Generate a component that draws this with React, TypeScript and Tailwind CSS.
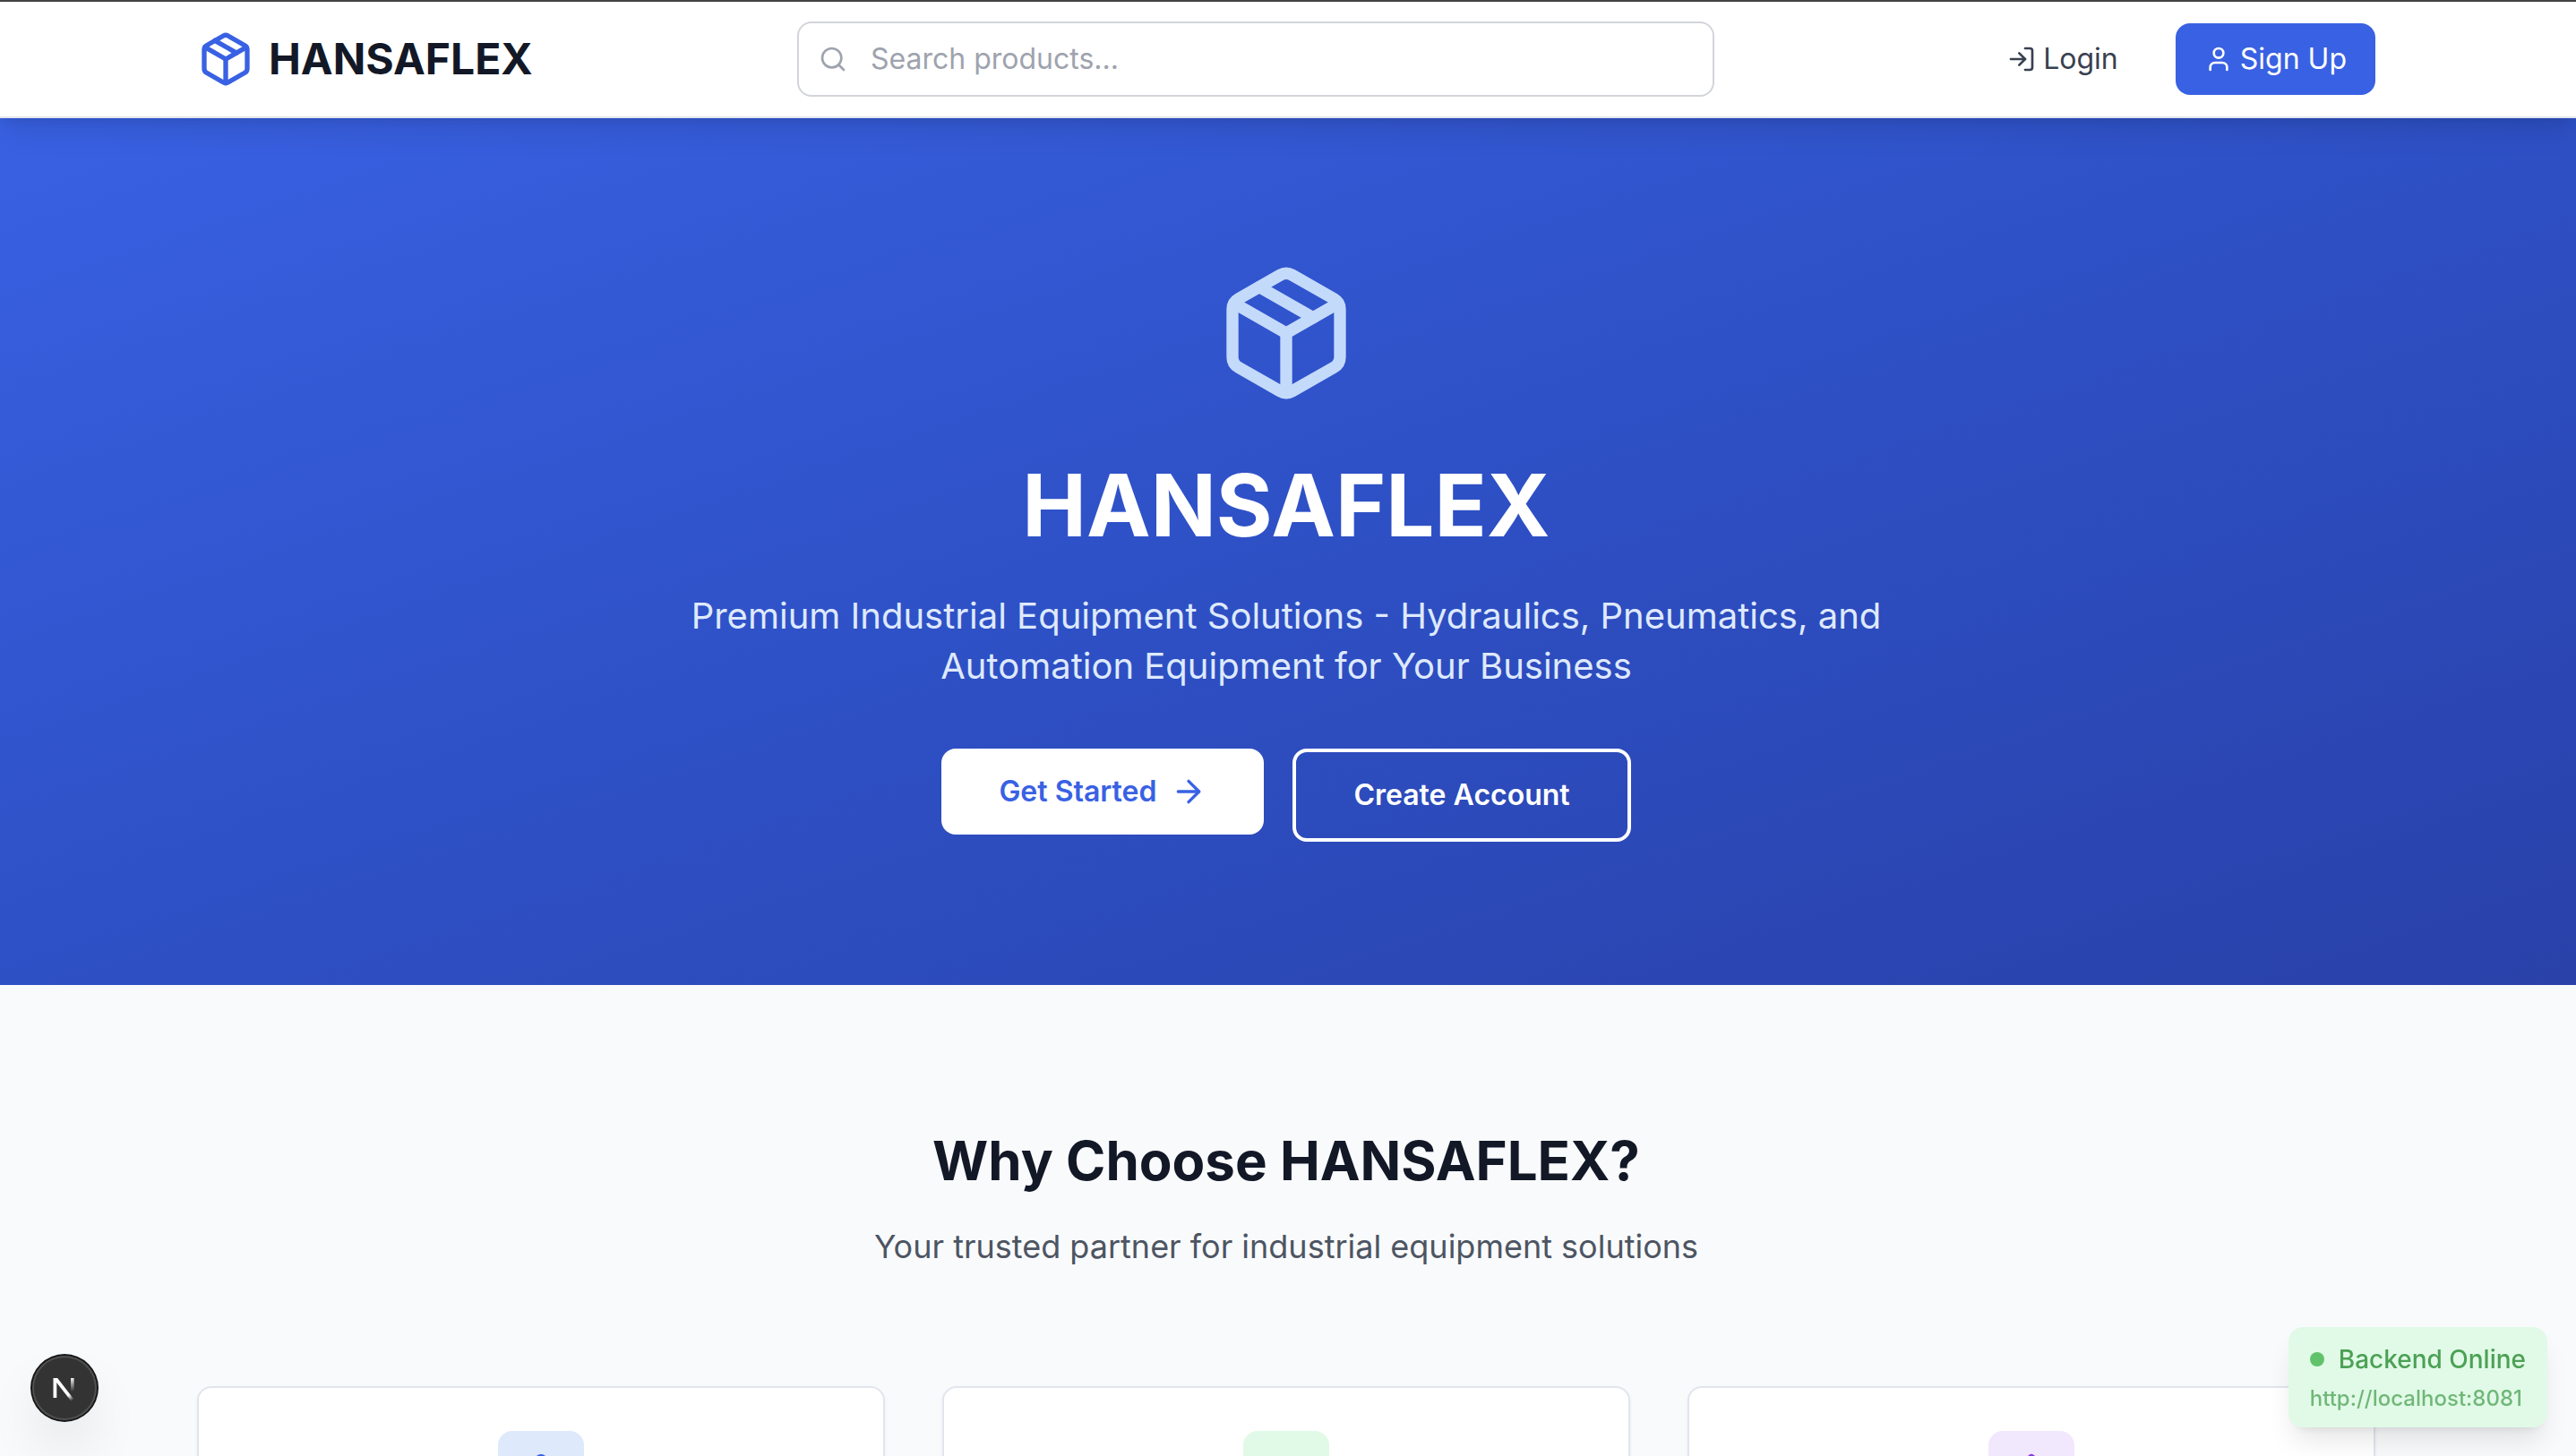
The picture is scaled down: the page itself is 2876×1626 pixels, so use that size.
import React from "react";
import { ArrowRight, LogIn, Search, Shield, Truck, User } from "lucide-react";

function PackageIcon({ className }: { className: string }) {
  return (
    <svg
      viewBox="0 0 24 24"
      fill="none"
      stroke="currentColor"
      strokeWidth="2"
      strokeLinecap="round"
      strokeLinejoin="round"
      aria-hidden="true"
      className={className}
    >
      <path d="m7.5 4.27 9 5.15" />
      <path d="M21 8a2 2 0 0 0-1-1.73l-7-4a2 2 0 0 0-2 0l-7 4A2 2 0 0 0 3 8v8a2 2 0 0 0 1 1.73l7 4a2 2 0 0 0 2 0l7-4A2 2 0 0 0 21 16Z" />
      <path d="m3.3 7 8.7 5 8.7-5" />
      <path d="M12 22V12" />
    </svg>
  );
}

function GearIcon({ className }: { className: string }) {
  return (
    <svg
      viewBox="0 0 24 24"
      fill="none"
      stroke="currentColor"
      strokeWidth="2"
      strokeLinecap="round"
      strokeLinejoin="round"
      aria-hidden="true"
      className={className}
    >
      <path d="M12.22 2h-.44a2 2 0 0 0-2 2v.18a2 2 0 0 1-1 1.73l-.43.25a2 2 0 0 1-2 0l-.15-.08a2 2 0 0 0-2.73.73l-.22.38a2 2 0 0 0 .73 2.73l.15.1a2 2 0 0 1 1 1.72v.51a2 2 0 0 1-1 1.74l-.15.09a2 2 0 0 0-.73 2.73l.22.38a2 2 0 0 0 2.73.73l.15-.08a2 2 0 0 1 2 0l.43.25a2 2 0 0 1 1 1.73V20a2 2 0 0 0 2 2h.44a2 2 0 0 0 2-2v-.18a2 2 0 0 1 1-1.73l.43-.25a2 2 0 0 1 2 0l.15.08a2 2 0 0 0 2.73-.73l.22-.39a2 2 0 0 0-.73-2.73l-.15-.08a2 2 0 0 1-1-1.74v-.5a2 2 0 0 1 1-1.74l.15-.09a2 2 0 0 0 .73-2.73l-.22-.38a2 2 0 0 0-2.73-.73l-.15.08a2 2 0 0 1-2 0l-.43-.25a2 2 0 0 1-1-1.73V4a2 2 0 0 0-2-2z" />
      <circle cx="12" cy="12" r="3" />
    </svg>
  );
}

function Header() {
  return (
    <header className="relative z-10 border-t-2 border-b-2 border-t-[#454243] border-b-[#e2e5ec] bg-white shadow-[0_20px_30px_-6px_rgba(0,0,0,0.1),0_8px_12px_-8px_rgba(0,0,0,0.1)]">
      <div className="mx-auto flex h-32 max-w-[2560px] items-center justify-between px-16">
        <a href="#" className="flex items-center gap-4">
          <PackageIcon className="size-16 text-[#3961e3]" />
          <span className="text-5xl font-bold text-[#131827]">HANSAFLEX</span>
        </a>
        <form className="relative w-full max-w-5xl" role="search">
          <Search className="pointer-events-none absolute top-1/2 left-6 size-8 -translate-y-1/2 text-[#9ea3ae]" aria-hidden="true" />
          <input
            type="text"
            aria-label="Search products"
            placeholder="Search products..."
            className="block w-full rounded-2xl border-2 border-[#d2d5da] py-4 pr-8 pl-20 text-[32px] leading-[48px] text-[#131827] placeholder:text-[#9ea3ae]"
          />
        </form>
        <nav className="flex items-center gap-8 text-[32px] leading-[48px]">
          <a href="#login" className="flex items-center gap-2 px-8 py-4 text-[#394150]">
            <LogIn className="size-8" aria-hidden="true" />
            Login
          </a>
          <a href="#signup" className="flex items-center gap-2 rounded-2xl bg-[#3961e3] px-8 py-4 text-white">
            <User className="size-8" aria-hidden="true" />
            Sign Up
          </a>
        </nav>
      </div>
    </header>
  );
}

function Hero() {
  return (
    <section className="bg-linear-to-br from-[#3961e3] via-[#2e50c5] to-[#2941a9] py-40">
      <div className="mx-auto max-w-[2560px] px-16 text-center">
        <PackageIcon className="mx-auto mb-16 size-40 text-[#c4dafb]" />
        <h1 className="mb-12 text-8xl leading-none font-bold text-white">HANSAFLEX</h1>
        <p className="mx-auto mb-16 max-w-[1536px] text-[40px] leading-[56px] text-[#dee9fc]">
          Premium Industrial Equipment Solutions - Hydraulics, Pneumatics, and Automation Equipment for Your Business
        </p>
        <div className="flex items-start justify-center gap-8 text-[32px] leading-[48px] font-semibold">
          <button type="button" className="flex items-center gap-4 rounded-2xl bg-white px-16 py-6 text-[#3961e3]">
            Get Started
            <ArrowRight className="size-10" aria-hidden="true" />
          </button>
          <button type="button" className="rounded-2xl border-4 border-white px-16 py-6 text-white">
            Create Account
          </button>
        </div>
      </div>
    </section>
  );
}

const features = [
  { name: "equipment", Icon: GearIcon, tile: "bg-[#dee9fc]", ink: "text-[#3961e3]" },
  { name: "delivery", Icon: Truck, tile: "bg-[#e1fae7]", ink: "text-[#4ba154]" },
  { name: "security", Icon: Shield, tile: "bg-[#f1e8fd]", ink: "text-[#8a3be2]" },
];

function Features() {
  return (
    <section className="py-40">
      <div className="mx-auto max-w-[2560px] px-16">
        <div className="mb-32 text-center">
          <h2 className="mb-8 text-6xl leading-[72px] font-bold text-[#131827]">Why Choose HANSAFLEX?</h2>
          <p className="text-4xl leading-[56px] text-[#4d5562]">Your trusted partner for industrial equipment solutions</p>
        </div>
        <div className="grid grid-cols-3 gap-16">
          {features.map(({ name, Icon, tile, ink }) => (
            <article
              key={name}
              className="rounded-2xl border-2 border-[#e2e5ec] bg-white p-12 shadow-[0_2px_4px_0_rgba(0,0,0,0.05)]"
            >
              <div className={`mx-auto flex size-24 items-center justify-center rounded-2xl ${tile}`}>
                <Icon className={`size-12 ${ink}`} />
              </div>
            </article>
          ))}
        </div>
      </div>
    </section>
  );
}

function DevIndicator() {
  return (
    <button
      type="button"
      aria-label="Open Next.js Dev Tools"
      className="fixed bottom-10 left-9 z-20 flex size-[72px] items-center justify-center rounded-full bg-[#333333] shadow-[0_0_0_2px_#171717,inset_0_0_0_2px_#505050,0_32px_64px_-16px_rgba(0,0,0,0.24)]"
    >
      <svg viewBox="0 0 40 40" fill="none" className="size-10" aria-hidden="true">
        <defs>
          <linearGradient id="diagonal" x1="20" y1="22" x2="29" y2="34" gradientUnits="userSpaceOnUse">
            <stop stopColor="white" />
            <stop offset="0.5" stopColor="white" />
            <stop offset="1" stopColor="white" stopOpacity="0" />
          </linearGradient>
          <linearGradient id="stem" x1="29" y1="8" x2="29" y2="24" gradientUnits="userSpaceOnUse">
            <stop stopColor="white" />
            <stop offset="1" stopColor="white" stopOpacity="0" />
          </linearGradient>
        </defs>
        <path d="M9.4 31V9" stroke="white" strokeWidth="3.8" />
        <path d="M7.5 9H12.2L31.5 34L28.6 36.2L10 12.5Z" fill="url(#diagonal)" />
        <path d="M28.8 9V24" stroke="url(#stem)" strokeWidth="3.6" />
      </svg>
    </button>
  );
}

function BackendStatus() {
  return (
    <aside className="fixed right-8 bottom-8 z-20 rounded-2xl bg-[#e1fae7] px-6 py-4 font-medium text-[#4ba154] shadow-[0_20px_30px_-6px_rgba(0,0,0,0.1),0_8px_12px_-8px_rgba(0,0,0,0.1)]">
      <div className="flex items-center gap-4 text-[28px] leading-10">
        <span className="size-4 rounded-full bg-[#60c36b]" />
        Backend Online
      </div>
      <div className="mt-2 text-2xl leading-8 opacity-75">http://localhost:8081</div>
    </aside>
  );
}

export default function App() {
  return (
    <div className="h-screen overflow-hidden bg-[#f9fafc] font-[Inter,sans-serif]">
      <div className="-ml-1">
        <Header />
        <main>
          <Hero />
          <Features />
        </main>
      </div>
      <DevIndicator />
      <BackendStatus />
    </div>
  );
}
